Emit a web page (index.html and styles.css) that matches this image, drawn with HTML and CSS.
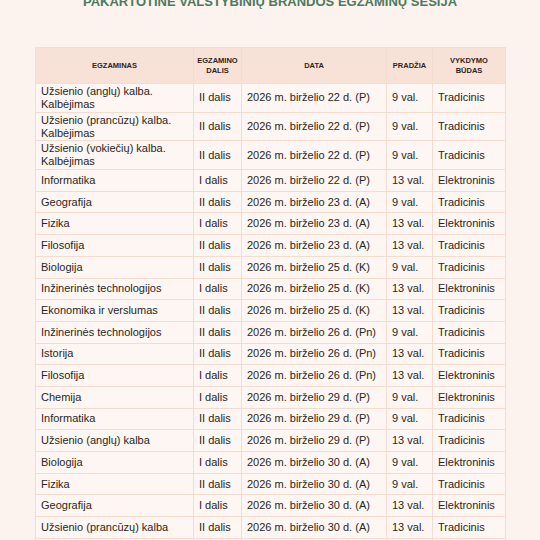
FILE: index.html
```html
<!DOCTYPE html>
<html lang="lt">
<head>
<meta charset="UTF-8">
<meta name="viewport" content="width=device-width, initial-scale=1.0">
<title>Pakartotinė sesija</title>
<link rel="stylesheet" href="styles.css">
</head>
<body>

<div class="page">
  <h1 class="title">Pakartotinė valstybinių brandos egzaminų sesija</h1>

  <table class="schedule">
    <colgroup>
      <col class="c-name">
      <col class="c-part">
      <col class="c-date">
      <col class="c-time">
      <col class="c-mode">
    </colgroup>
    <thead>
      <tr>
        <th>Egzaminas</th>
        <th>Egzamino<br>dalis</th>
        <th>Data</th>
        <th>Pradžia</th>
        <th>Vykdymo<br>būdas</th>
      </tr>
    </thead>
    <tbody>
      <tr class="tall"><td>Užsienio (anglų) kalba. Kalbėjimas</td><td>II dalis</td><td>2026 m. birželio 22 d. (P)</td><td>9 val.</td><td>Tradicinis</td></tr>
      <tr class="tall"><td>Užsienio (prancūzų) kalba. Kalbėjimas</td><td>II dalis</td><td>2026 m. birželio 22 d. (P)</td><td>9 val.</td><td>Tradicinis</td></tr>
      <tr class="tall"><td>Užsienio (vokiečių) kalba. Kalbėjimas</td><td>II dalis</td><td>2026 m. birželio 22 d. (P)</td><td>9 val.</td><td>Tradicinis</td></tr>
      <tr><td>Informatika</td><td>I dalis</td><td>2026 m. birželio 22 d. (P)</td><td>13 val.</td><td>Elektroninis</td></tr>
      <tr><td>Geografija</td><td>II dalis</td><td>2026 m. birželio 23 d. (A)</td><td>9 val.</td><td>Tradicinis</td></tr>
      <tr><td>Fizika</td><td>I dalis</td><td>2026 m. birželio 23 d. (A)</td><td>13 val.</td><td>Elektroninis</td></tr>
      <tr><td>Filosofija</td><td>II dalis</td><td>2026 m. birželio 23 d. (A)</td><td>13 val.</td><td>Tradicinis</td></tr>
      <tr><td>Biologija</td><td>II dalis</td><td>2026 m. birželio 25 d. (K)</td><td>9 val.</td><td>Tradicinis</td></tr>
      <tr><td>Inžinerinės technologijos</td><td>I dalis</td><td>2026 m. birželio 25 d. (K)</td><td>13 val.</td><td>Elektroninis</td></tr>
      <tr><td>Ekonomika ir verslumas</td><td>II dalis</td><td>2026 m. birželio 25 d. (K)</td><td>13 val.</td><td>Tradicinis</td></tr>
      <tr><td>Inžinerinės technologijos</td><td>II dalis</td><td>2026 m. birželio 26 d. (Pn)</td><td>9 val.</td><td>Tradicinis</td></tr>
      <tr><td>Istorija</td><td>II dalis</td><td>2026 m. birželio 26 d. (Pn)</td><td>13 val.</td><td>Tradicinis</td></tr>
      <tr><td>Filosofija</td><td>I dalis</td><td>2026 m. birželio 26 d. (Pn)</td><td>13 val.</td><td>Elektroninis</td></tr>
      <tr><td>Chemija</td><td>I dalis</td><td>2026 m. birželio 29 d. (P)</td><td>9 val.</td><td>Elektroninis</td></tr>
      <tr><td>Informatika</td><td>II dalis</td><td>2026 m. birželio 29 d. (P)</td><td>9 val.</td><td>Tradicinis</td></tr>
      <tr><td>Užsienio (anglų) kalba</td><td>II dalis</td><td>2026 m. birželio 29 d. (P)</td><td>13 val.</td><td>Tradicinis</td></tr>
      <tr><td>Biologija</td><td>I dalis</td><td>2026 m. birželio 30 d. (A)</td><td>9 val.</td><td>Elektroninis</td></tr>
      <tr><td>Fizika</td><td>II dalis</td><td>2026 m. birželio 30 d. (A)</td><td>9 val.</td><td>Tradicinis</td></tr>
      <tr><td>Geografija</td><td>I dalis</td><td>2026 m. birželio 30 d. (A)</td><td>13 val.</td><td>Elektroninis</td></tr>
      <tr><td>Užsienio (prancūzų) kalba</td><td>II dalis</td><td>2026 m. birželio 30 d. (A)</td><td>13 val.</td><td>Tradicinis</td></tr>
      <tr><td>Užsienio (vokiečių) kalba</td><td>II dalis</td><td>2026 m. birželio 30 d. (A)</td><td>13 val.</td><td>Tradicinis</td></tr>
    </tbody>
  </table>
</div>

</body>
</html>
```

FILE: styles.css
```css
html, body {
  margin: 0;
  background-color: #fcf3ee;
}
body {
  font-family: "Liberation Sans", Arial, sans-serif;
  color: #2b2622;
}
.page {
  padding: 0 35px;
  overflow: hidden;
  height: 540px;
}
.title {
  margin: -6px 0 0;
  font-size: 13px;
  line-height: 16px;
  font-weight: bold;
  text-align: center;
  text-transform: uppercase;
  color: #4e7a5f;
}
.schedule {
  width: 470px;
  margin-top: 37px;
  border-collapse: collapse;
  table-layout: fixed;
  background-color: #fdf6f2;
}
.c-name { width: 158px; }
.c-part { width: 48px; }
.c-date { width: 145px; }
.c-time { width: 46px; }
.c-mode { width: 73px; }
.schedule th,
.schedule td {
  border: 1px solid #f5dccf;
}
.schedule th {
  height: 35px;
  padding: 0 2px;
  font-size: 7.5px;
  line-height: 9.5px;
  font-weight: bold;
  text-transform: uppercase;
  color: #2f2420;
  background-color: #f8e1d6;
}
.schedule td {
  height: 20.7px;
  padding: 0 5px;
  font-size: 11px;
  line-height: 13px;
  vertical-align: middle;
}
.schedule tr.tall td {
  height: 27.7px;
}
```
